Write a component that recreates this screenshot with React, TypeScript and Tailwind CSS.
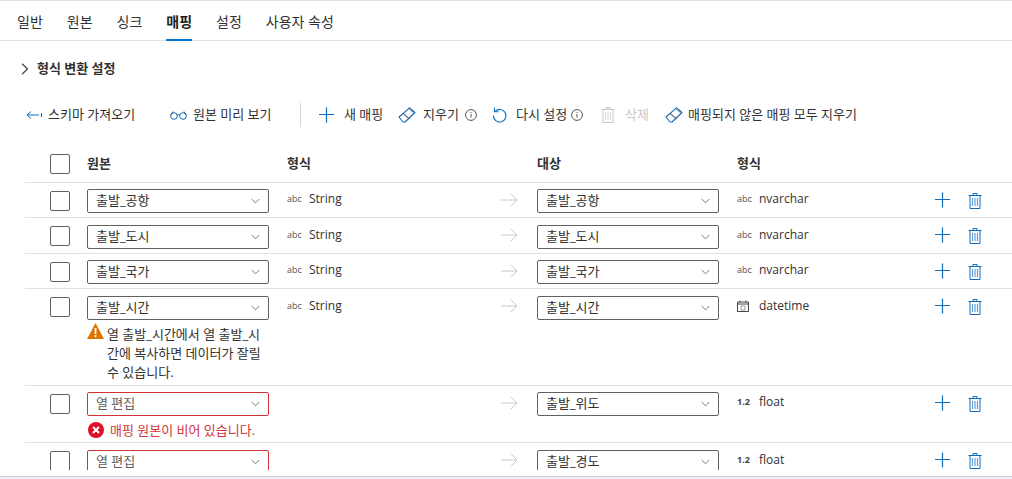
import React from "react";

const tabs = ["일반", "원본", "싱크", "매핑", "설정", "사용자 속성"];

const Eraser = () => (
  <svg width="18" height="16" viewBox="0 0 18 16" fill="none" className="shrink-0">
    <path d="M1 10 11.5 .8 17 5.5 7 15H5z" stroke="#0f6cbd" strokeWidth="1.1" strokeLinejoin="round" />
    <path d="M5 6.3 11.5 12" stroke="#616161" strokeWidth="1.1" />
    <path d="M11.5 2.2 15.5 5.6" stroke="#616161" strokeWidth="1" />
  </svg>
);

const Trash = ({ color = "#0f6cbd", bars = "#0f6cbd" }: { color?: string; bars?: string }) => (
  <svg width="14" height="16" viewBox="0 0 14 16" fill="none" className="shrink-0">
    <path d="M.5 2.5h13M5 2.5V.5h4v2M2 2.5v13h10v-13" stroke={color} strokeWidth="1" />
    <path d="M4.5 5v8M7 5v8M9.5 5v8" stroke={bars} strokeWidth="1.2" opacity=".65" />
  </svg>
);

const Plus = () => (
  <svg width="16" height="16" viewBox="0 0 16 16" fill="none" className="shrink-0">
    <path d="M7.5 .5v15M0 7.5h15" stroke="#0f6cbd" strokeWidth="1.2" />
  </svg>
);

const Info = () => (
  <svg width="12" height="12" viewBox="0 0 12 12" fill="none" className="shrink-0">
    <circle cx="6" cy="6" r="5.4" stroke="#555" />
    <path d="M6 5v3.6M6 3v1.1" stroke="#555" />
  </svg>
);

const Chevron = () => (
  <svg width="9" height="6" viewBox="0 0 9 6" fill="none" className="shrink-0">
    <path d="M.7 1 4.5 4.8 8.3 1" stroke="#777" />
  </svg>
);

const Check = () => <div className="w-5 h-5 shrink-0 rounded-[2px] border border-[#616161] bg-white" />;

const Arrow = () => (
  <svg width="17" height="14" viewBox="0 0 17 14" fill="none">
    <path d="M0 7h16M10 1l6 6-6 6" stroke="#c8c8c8" />
  </svg>
);

const Select = ({ label, error, muted }: { label: string; error?: boolean; muted?: boolean }) => (
  <div
    className={`w-[182px] h-6 flex items-center justify-between pl-2 pr-2 rounded-[2px] border bg-white text-[13px] ${
      error ? "border-[#d13438]" : "border-[#616161]"
    } ${muted ? "text-[#605e5c]" : "text-[#323130]"}`}
  >
    <span>{label}</span>
    <Chevron />
  </div>
);

const TypeIcon = ({ kind }: { kind: string }) => {
  if (kind === "abc") {
    return <span className="w-[22px] -mt-px text-[9px] leading-none text-[#555]">abc</span>;
  }
  if (kind === "num") {
    return <span className="w-[22px] -mt-[2px] text-[9px] leading-none font-bold text-[#444]">1.2</span>;
  }
  return (
    <span className="w-[22px]">
      <svg width="12" height="12" viewBox="0 0 12 12" fill="none">
        <path d="M.5 2h11v9.5H.5zM.5 4h11" stroke="#444" />
        <path d="M3 .5v2M9 .5v2" stroke="#444" />
        <path d="M4 6h4v4H4z" stroke="#777" strokeWidth=".7" />
      </svg>
    </span>
  );
};

const TypeCell = ({ kind, label }: { kind: string; label: string }) => (
  <div className="flex items-center text-[12px] leading-4 text-[#323130]">
    <TypeIcon kind={kind} />
    <span>{label}</span>
  </div>
);

const Action = ({
  icon,
  label,
  className,
  muted,
  info,
}: {
  icon: React.ReactNode;
  label: string;
  className?: string;
  muted?: boolean;
  info?: string;
}) => (
  <div className={`flex items-center shrink-0 ${className ?? ""}`}>
    {icon}
    <span className={`whitespace-nowrap text-[13px] ${muted ? "text-[#c8c6c4]" : "text-[#323130]"}`}>{label}</span>
    {info && (
      <span className={info}>
        <Info />
      </span>
    )}
  </div>
);

type Row = {
  source?: string;
  sourceType?: string;
  target: string;
  kind: string;
  type: string;
  height: string;
  pad: string;
  note?: React.ReactNode;
};

const rows: Row[] = [
  { source: "출발_공항", sourceType: "String", target: "출발_공항", kind: "abc", type: "nvarchar", height: "h-[35px]", pad: "pt-[6px]" },
  { source: "출발_도시", sourceType: "String", target: "출발_도시", kind: "abc", type: "nvarchar", height: "h-[36px]", pad: "pt-[7px]" },
  { source: "출발_국가", sourceType: "String", target: "출발_국가", kind: "abc", type: "nvarchar", height: "h-[35px]", pad: "pt-[6px]" },
  {
    source: "출발_시간",
    sourceType: "String",
    target: "출발_시간",
    kind: "date",
    type: "datetime",
    height: "h-[97px]",
    pad: "pt-[7px]",
    note: (
      <div className="flex mt-[3px] text-[13px] leading-[19px] text-[#323130]">
        <svg width="17" height="16" viewBox="0 0 17 16" className="shrink-0 mr-[3px]">
          <path d="M8.5 0 17 16H0z" fill="#e07400" />
          <path d="M7.6 5h1.8v6H7.6zM7.6 12h1.8v2H7.6z" fill="#fff" />
        </svg>
        <span className="whitespace-nowrap pt-[2px]">
          열 출발_시간에서 열 출발_시
          <br />
          간에 복사하면 데이터가 잘릴
          <br />수 있습니다.
        </span>
      </div>
    ),
  },
  {
    target: "출발_위도",
    kind: "num",
    type: "float",
    height: "h-[57px]",
    pad: "pt-[6px]",
    note: (
      <div className="flex items-center mt-[3px] text-[13px] leading-[22px] text-[#d13438] whitespace-nowrap">
        <svg width="16" height="16" viewBox="0 0 16 16" className="shrink-0 mr-[6px] ml-[1px]">
          <circle cx="8" cy="8" r="8" fill="#e0102a" />
          <path d="M5 5l6 6M11 5l-6 6" stroke="#fff" strokeWidth="2" />
        </svg>
        매핑 원본이 비어 있습니다.
      </div>
    ),
  },
  { target: "출발_경도", kind: "num", type: "float", height: "h-[34px]", pad: "pt-[7px]" },
];

export default function App() {
  return (
    <div
      className="w-[1012px] h-[479px] overflow-hidden bg-white flex flex-col"
      style={{ fontFamily: '"Open Sans", "Noto Sans CJK KR", sans-serif' }}
    >
      <div className="h-px bg-[#e1e1e1] shrink-0" />
      <div className="h-10 shrink-0 flex pl-[17px] gap-6 border-b border-[#e1e1e1] text-[14px] text-[#323130]">
        {tabs.map((t) => (
          <div
            key={t}
            className={`h-10 -mb-px pt-[10px] whitespace-nowrap ${
              t === "매핑" ? "font-bold border-b-2 border-[#0078d4] text-[#201f1e]" : ""
            }`}
          >
            {t}
          </div>
        ))}
      </div>

      <div className="shrink-0 flex items-center h-4 mt-[20px] pl-[21px]">
        <svg width="8" height="12" viewBox="0 0 8 12" fill="none" className="mr-2">
          <path d="M1 .8 6.5 6 1 11.2" stroke="#444" strokeWidth="1.2" />
        </svg>
        <span className="text-[13px] font-bold text-[#323130]">형식 변환 설정</span>
      </div>

      <div className="shrink-0 flex items-center h-6 mt-[26px] pl-[26px]">
        <Action
          className="w-[144px]"
          label="스키마 가져오기"
          icon={
            <svg width="16" height="10" viewBox="0 0 16 10" fill="none" className="mr-[6px]">
              <path d="M1 5h12M5 1.5 1 5l4 3.5" stroke="#0f6cbd" />
              <path d="M15.5 3v4" stroke="#0f6cbd" />
            </svg>
          }
        />
        <Action
          className="w-[130px]"
          label="원본 미리 보기"
          icon={
            <svg width="17" height="10" viewBox="0 0 17 10" fill="none" className="mr-[6px]">
              <circle cx="4" cy="6" r="3.3" stroke="#0f6cbd" />
              <circle cx="13" cy="6" r="3.3" stroke="#0f6cbd" />
              <path d="M7 5q1.500-1 3 0M.7 5 3 1.500M16.300 5 14 1.500" stroke="#555" />
            </svg>
          }
        />
        <div className="w-px h-6 bg-[#d8d8d8] mr-[18px]" />
        <Action
          className="w-[79px]"
          label="새 매핑"
          icon={
            <span className="mr-[9px]">
              <Plus />
            </span>
          }
        />
        <Action
          className="w-[94px]"
          label="지우기"
          info="ml-[6px]"
          icon={
            <span className="mr-[7px]">
              <Eraser />
            </span>
          }
        />
        <Action
          className="w-[109px]"
          label="다시 설정"
          info="ml-[4px]"
          icon={
            <svg width="16" height="17" viewBox="0 0 16 17" fill="none" className="mr-2">
              <path d="M3 4.500a6.300 6.300 0 1 1-1.600 4" stroke="#0f6cbd" strokeWidth="1.1" />
              <path d="M2.500 .5v4.200h4.200" stroke="#0f6cbd" strokeWidth="1.1" />
            </svg>
          }
        />
        <Action
          className="w-[64px]"
          muted
          label="삭제"
          icon={
            <span className="mr-[10px]">
              <Trash color="#c8c6c4" bars="#c8c6c4" />
            </span>
          }
        />
        <Action
          label="매핑되지 않은 매핑 모두 지우기"
          icon={
            <span className="mr-[5px]">
              <Eraser />
            </span>
          }
        />
      </div>

      <div className="shrink-0 flex items-center h-[37px] mt-[19px] ml-[25px] pl-[25px] border-b border-[#e1e1e1] text-[13px] font-bold text-[#323130]">
        <Check />
        <span className="ml-[17px] w-[200px]">원본</span>
        <span className="w-[250px]">형식</span>
        <span className="w-[200px]">대상</span>
        <span>형식</span>
      </div>

      <div className="h-[287px] shrink-0 overflow-hidden">
        {rows.map((r) => (
          <div key={r.target} className={`flex ml-[25px] pl-[25px] border-b border-[#e1e1e1] ${r.height}`}>
            <div className="mt-2">
              <Check />
            </div>
            <div className={`ml-[17px] w-[200px] ${r.pad}`}>
              <Select label={r.source ?? "열 편집"} error={!r.source} muted={!r.source} />
              {r.note}
            </div>
            <div className={`w-[214px] ${r.pad}`}>
              <div className="pt-[2px]">{r.sourceType && <TypeCell kind="abc" label={r.sourceType} />}</div>
            </div>
            <div className="w-[36px] pt-[10px]">
              <Arrow />
            </div>
            <div className={`w-[200px] ${r.pad}`}>
              <Select label={r.target} />
            </div>
            <div className={`w-[198px] ${r.pad}`}>
              <div className="pt-[2px]">
                <TypeCell kind={r.kind} label={r.type} />
              </div>
            </div>
            <div className="pt-[9px]">
              <Plus />
            </div>
            <div className="ml-[17px] pt-[10px]">
              <Trash />
            </div>
          </div>
        ))}
      </div>

      <div className="h-[6px] shrink-0" />
      <div className="shrink-0 h-px bg-[#c8c8d0]" />
      <div className="grow bg-[#eeeefa]" />
    </div>
  );
}
